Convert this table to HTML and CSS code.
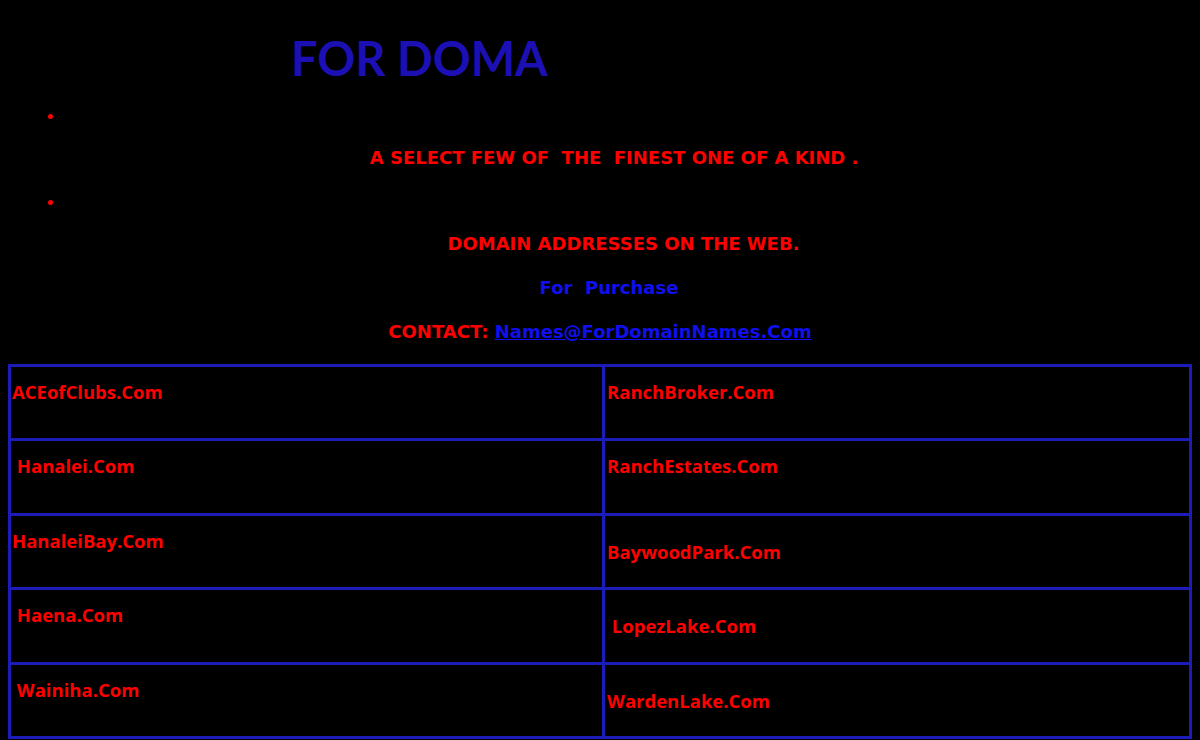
FILE: index.html
```html
<!DOCTYPE html>
<html>
<head>
<meta charset="utf-8">
<title>For Domain Names</title>
<link rel="stylesheet" href="styles.css">
</head>
<body>
<h1 class="title">FOR DOMA</h1>
<ul class="intro">
  <li><span class="blank">&nbsp;</span><p class="line red">A SELECT FEW OF&nbsp; THE&nbsp; FINEST ONE OF A KIND .&nbsp;&nbsp;&nbsp;</p></li>
  <li><span class="blank">&nbsp;</span><p class="line red">DOMAIN ADDRESSES ON THE WEB.</p></li>
</ul>
<p class="line center blue purchase">For&nbsp; Purchase</p>
<p class="line center red">CONTACT: <a class="mail" href="#">Names@ForDomainNames.Com</a></p>
<table class="domains">
  <tr class="r74">
    <td class="left up">ACEofClubs.Com</td>
    <td class="right up">RanchBroker.Com</td>
  </tr>
  <tr class="r75">
    <td class="left up">&nbsp;Hanalei.Com</td>
    <td class="right up">RanchEstates.Com</td>
  </tr>
  <tr class="r74">
    <td class="left up">HanaleiBay.Com</td>
    <td class="right">BaywoodPark.Com</td>
  </tr>
  <tr class="r75">
    <td class="left up">&nbsp;Haena.Com</td>
    <td class="right">&nbsp;LopezLake.Com</td>
  </tr>
  <tr class="r74">
    <td class="left up">&nbsp;Wainiha.Com</td>
    <td class="right">WardenLake.Com</td>
  </tr>
</table>
</body>
</html>
```

FILE: styles.css
```css
html, body {
  background: #000;
}
body {
  margin: 8px;
  font-family: "DejaVu Sans", Verdana, sans-serif;
}
.title {
  margin: 0;
  padding: 22px 0 0 283px;
  height: 76px;
  font-family: "Lato", "Liberation Sans", sans-serif;
  font-weight: 700;
  font-size: 47px;
  line-height: 56px;
  color: #1c10b4;
}
.intro {
  margin: 0;
  padding-left: 57px;
  padding-right: 10px;
  color: #f00;
  list-style: disc;
}
.intro li {
  font-size: 16px;
  line-height: 22px;
  margin-bottom: 23px;
}
.intro li:last-child {
  margin-bottom: 22px;
}
.blank {
  display: block;
  height: 22px;
}
.line {
  margin: 0;
  font-weight: 700;
  font-size: 18px;
  line-height: 22px;
  text-align: center;
}
.intro .line {
  margin-top: 19px;
}
.center {
  margin-bottom: 22px;
}
.purchase {
  padding-left: 18px;
}
.red { color: #f00; }
.blue { color: #1010ee; }
.mail {
  color: #1010ee;
  text-decoration: underline;
}
.domains {
  width: 1184px;
  border: 1px solid #1c1cb8;
  border-spacing: 1px;
  background: #1c1cb8;
  margin-top: -1px;
}
.domains td {
  background: #000;
  border: 1px solid #1c1cb8;
  padding: 0 1px;
  vertical-align: middle;
  font-family: "Open Sans", "Noto Sans", sans-serif;
  font-weight: 700;
  font-size: 18.5px;
  line-height: 22px;
  color: #f00;
  white-space: nowrap;
}
.domains td.left {
  width: 589px;
}
.domains td.right {
  padding-left: 2px;
}
.domains td.up {
  padding-bottom: 22px;
}
.r74 { height: 73px; }
.r75 { height: 74px; }
```
